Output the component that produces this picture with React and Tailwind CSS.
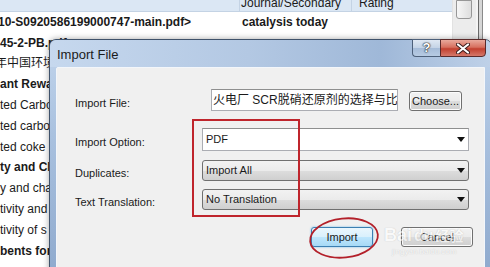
import React from 'react';

const ROWS = [
  { text: '10-S0920586199000747-main.pdf>', bold: true, journal: 'catalysis today', shift: '-ml-[2px]' },
  { text: '45-2-PB.pdf>', bold: true, shift: 'ml-0' },
  { text: '年中国环境保护', bold: false, shift: '-ml-[5px]' },
  { text: 'ant Reward', bold: true, shift: 'ml-0' },
  { text: 'ted Carbon', bold: false, shift: 'ml-0' },
  { text: 'ted carbon', bold: false, shift: 'ml-0' },
  { text: 'ted coke', bold: false, shift: 'ml-0' },
  { text: 'ty and Char', bold: true, shift: 'ml-0' },
  { text: 'y and char', bold: false, shift: 'ml-0' },
  { text: 'tivity and', bold: false, shift: 'ml-0' },
  { text: 'tivity of s', bold: false, shift: 'ml-0' },
  { text: 'bents for', bold: true, shift: 'ml-0' },
];

const btn =
  'border border-[#707070] rounded-[3px] bg-[linear-gradient(180deg,#f2f2f2_0%,#ebebeb_50%,#dddddd_51%,#cfcfcf_100%)] shadow-[inset_0_0_0_1px_#fcfcfc]';

function Arrow() {
  return (
    <svg width="8" height="5" viewBox="0 0 8 5" className="shrink-0">
      <polygon points="0,0 8,0 4,5" fill="#111" />
    </svg>
  );
}

function Combo({ label, value, edit, h }) {
  return (
    <div className="flex items-center">
      <span className="w-[127px] pt-[6px]">{label}</span>
      <div
        className={
          'w-[267px] flex items-center pl-[3px] pr-[3px] ' +
          h +
          ' ' +
          (edit
            ? 'bg-white border border-[#abadb3] border-t-[#8e8f8f]'
            : 'border border-[#707070] rounded-[3px] bg-[linear-gradient(180deg,#f2f2f2_0%,#ebebeb_50%,#dddddd_51%,#cfcfcf_100%)]')
        }
      >
        <span className="flex-1">{value}</span>
        <Arrow />
      </div>
    </div>
  );
}

export default function App() {
  return (
    <div className="relative w-[490px] h-[267px] overflow-hidden bg-white text-[#1a1a1a] font-['Liberation_Sans','Noto_Sans_CJK_SC',sans-serif]">
      {/* Reference list behind the dialog */}
      <div className="flex h-full">
        <div className="w-[452px] flex flex-col text-[12px]">
          <div className="h-[11.5px] shrink-0 flex bg-[#dbe7f4] border-b border-[#c4d3e4] overflow-hidden">
            <div className="w-[240px] border-r border-[#c4d3e4]" />
            <div className="w-[112px] pl-[1px] -mt-[6px] border-r border-[#c4d3e4]">Journal/Secondary</div>
            <div className="flex-1 pl-[7px] -mt-[6px]">Rating</div>
          </div>
          {ROWS.map((r, i) => (
            <div key={i} className="h-[20.8px] shrink-0 flex items-center whitespace-nowrap">
              <div className={'w-[240px] overflow-hidden ' + (r.bold ? 'font-bold' : '')}>
                <span className={'block ' + r.shift}>{r.text}</span>
              </div>
              <div className="pl-[2px] font-bold">{r.journal}</div>
            </div>
          ))}
        </div>
        <div className="w-[24px] bg-[#ececec] border-l border-[#e2e2e2]">
          <div className="ml-[3px] w-[16px] h-[19px] rounded-b-[3px] border border-[#979797] bg-[linear-gradient(90deg,#f6f6f6,#dedede)]" />
        </div>
        <div className="flex-1 flex">
          <div className="w-[2px] bg-[#f4f4f4]" />
          <div className="w-[1px] bg-[#6a6a6a]" />
          <div className="w-[3px] bg-[#d6d6d6]" />
          <div className="w-[1px] bg-[#8a8a8a]" />
          <div className="flex-1 bg-white" />
        </div>
      </div>

      {/* Import File dialog */}
      <div className="absolute left-[49px] top-[39px] w-[443px] h-[240px] rounded-t-[7px] border border-[#3f526b] bg-[linear-gradient(180deg,#c2d5ec_0%,#a9c1df_40%,#8ea9cd_100%)] flex flex-col shadow-[0_0_6px_rgba(0,0,0,0.35)]">
        <div className="h-[27px] shrink-0 flex items-start rounded-t-[7px] bg-[linear-gradient(90deg,#c6d8ee_0%,#b3c8e3_45%,#9fb8d8_75%,#bfd1e8_100%)]">
          <span className="pl-[7px] pt-[7px] text-[13px] leading-[15px] text-[#1b1b1b]">Import File</span>
          <div className="ml-auto mr-[5px] -mt-[1px] flex">
            <div className="w-[28px] h-[18px] flex items-center justify-center rounded-bl-[4px] border border-[#4d607a] border-r-0 bg-[linear-gradient(180deg,#dfe8f3_0%,#c3d3e6_50%,#a6bcd8_51%,#b7cbe3_100%)] text-white font-bold text-[13px] [text-shadow:0_0_1px_#222,0_0_1px_#222,0_0_2px_#333]">
              ?
            </div>
            <div className="w-[46px] h-[18px] flex items-center justify-center rounded-br-[4px] border border-[#5a2a2a] bg-[linear-gradient(180deg,#e9a99c_0%,#d7705f_45%,#c2402f_55%,#d5786a_100%)]">
              <svg width="14" height="11" viewBox="0 0 14 11">
                <path d="M2 1.5 L12 9.5 M12 1.5 L2 9.5" stroke="#3b1b1b" strokeWidth="4" strokeLinecap="round" />
                <path d="M2 1.5 L12 9.5 M12 1.5 L2 9.5" stroke="#ffffff" strokeWidth="2.2" strokeLinecap="round" />
              </svg>
            </div>
          </div>
        </div>

        <div className="flex-1 ml-[6px] mr-[6px] border border-[#f3f6fa] rounded-tl-[2px] bg-[#f0f0f0] pl-[18px] pt-[21px] text-[11px] leading-[13px]">
          <div className="flex items-center h-[22px]">
            <span className="w-[136px] pt-[6px]">Import File:</span>
            <div className="w-[187px] h-[22px] bg-white border border-[#abadb3] border-t-[#8e8f8f] pl-[1px] flex items-center overflow-hidden whitespace-nowrap text-[12px]">
              火电厂 SCR脱硝还原剂的选择与比较
            </div>
            <div className={'ml-[11px] self-end w-[53px] h-[20px] flex items-center justify-center ' + btn}>Choose...</div>
          </div>

          <div className="mt-[17px]">
            <Combo label="Import Option:" value="PDF" edit h="h-[23px]" />
          </div>
          <div className="mt-[9px]">
            <Combo label="Duplicates:" value="Import All" h="h-[21px]" />
          </div>
          <div className="mt-[8px]">
            <Combo label="Text Translation:" value="No Translation" h="h-[21px]" />
          </div>

          <div className="mt-[17px] flex pl-[236px]">
            <div className="w-[62px] h-[20px] flex items-center justify-center rounded-[3px] border border-[#3c7fb1] bg-[linear-gradient(180deg,#eaf6fd_0%,#d9f0fc_50%,#bee6fd_51%,#a7d9f5_100%)] shadow-[0_0_2px_#5fb3e6]">
              Import
            </div>
            <div className={'ml-[28px] w-[72px] h-[20px] flex items-center justify-center ' + btn}>Cancel</div>
          </div>
        </div>
      </div>

      {/* Red annotations */}
      <div className="absolute left-[192px] top-[119px] w-[108px] h-[98px] border-2 border-[#bf252c]" />
      <svg className="absolute left-[307px] top-[215px]" width="74" height="46" viewBox="0 0 74 46">
        <ellipse cx="37" cy="23" rx="34" ry="19.5" transform="rotate(-6 37 23)" fill="none" stroke="#b3202a" strokeWidth="1.8" />
      </svg>

      {/* Watermark */}
      <div className="absolute left-[384px] top-[222px] flex items-baseline gap-[2px] opacity-60 text-white font-bold [text-shadow:0_0_1px_#9a9a9a]">
        <span className="text-[18px]">Bai</span>
        <span className="text-[16px]">du</span>
        <span className="text-[14px]">经验</span>
      </div>
      <div className="absolute left-[392px] top-[246px] text-[8px] text-white opacity-60 [text-shadow:0_0_1px_#9a9a9a]">
        jingyan.baidu.com
      </div>
    </div>
  );
}
